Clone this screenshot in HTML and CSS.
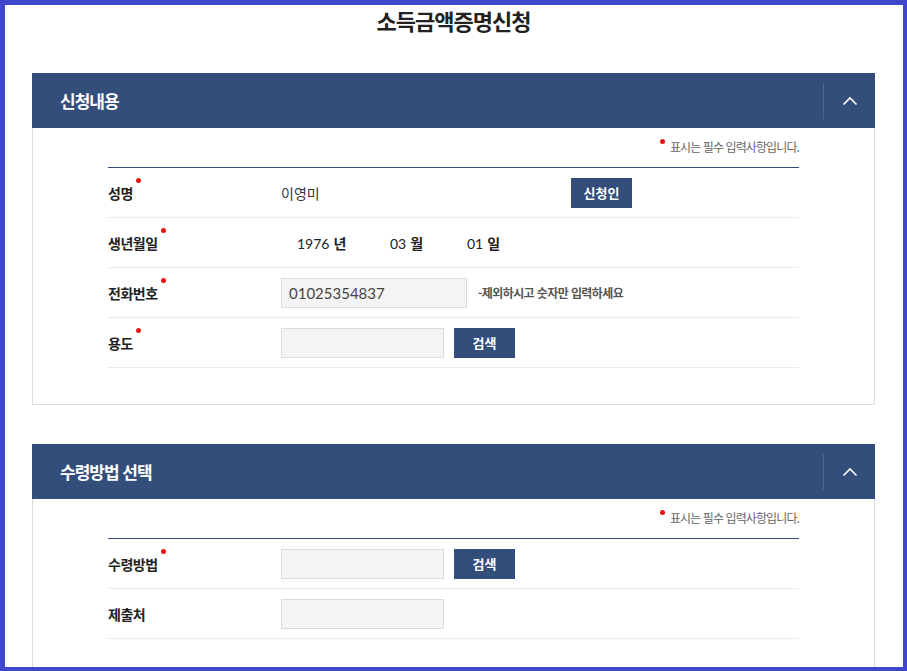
FILE: index.html
```html
<!DOCTYPE html>
<html lang="ko">
<head>
<meta charset="utf-8">
<title>소득금액증명신청</title>
<link rel="stylesheet" href="styles.css">
</head>
<body>
<div class="page">
  <h1 class="title">소득금액증명신청</h1>

  <section class="panel">
    <div class="panel-head">
      <h2 class="panel-title">신청내용</h2>
      <button class="toggle" type="button" aria-label="접기">
        <svg width="16" height="10" viewBox="0 0 16 10"><polyline points="1.5,8.5 8,2 14.5,8.5" fill="none" stroke="#fff" stroke-width="1.6"/></svg>
      </button>
    </div>
    <div class="panel-body">
      <p class="note"><span class="dot"></span>표시는 필수 입력사항입니다.</p>
      <div class="form">
        <div class="row">
          <div class="label"><span class="req">성명</span></div>
          <div class="value">
            <span class="name">이영미</span>
            <button class="btn" type="button">신청인</button>
          </div>
        </div>
        <div class="row">
          <div class="label"><span class="req">생년월일</span></div>
          <div class="value date">
            <span class="d d-y"><span class="num">1976</span> <b>년</b></span>
            <span class="d d-m"><span class="num">03</span> <b>월</b></span>
            <span class="d"><span class="num">01</span> <b>일</b></span>
          </div>
        </div>
        <div class="row">
          <div class="label"><span class="req">전화번호</span></div>
          <div class="value">
            <div class="input wide">01025354837</div>
            <span class="hint">-제외하시고 숫자만 입력하세요</span>
          </div>
        </div>
        <div class="row">
          <div class="label"><span class="req">용도</span></div>
          <div class="value">
            <div class="input"></div>
            <button class="btn" type="button">검색</button>
          </div>
        </div>
      </div>
    </div>
  </section>

  <section class="panel">
    <div class="panel-head">
      <h2 class="panel-title">수령방법 선택</h2>
      <button class="toggle" type="button" aria-label="접기">
        <svg width="16" height="10" viewBox="0 0 16 10"><polyline points="1.5,8.5 8,2 14.5,8.5" fill="none" stroke="#fff" stroke-width="1.6"/></svg>
      </button>
    </div>
    <div class="panel-body">
      <p class="note"><span class="dot"></span>표시는 필수 입력사항입니다.</p>
      <div class="form">
        <div class="row">
          <div class="label"><span class="req">수령방법</span></div>
          <div class="value">
            <div class="input"></div>
            <button class="btn" type="button">검색</button>
          </div>
        </div>
        <div class="row">
          <div class="label"><span>제출처</span></div>
          <div class="value">
            <div class="input"></div>
          </div>
        </div>
      </div>
    </div>
  </section>
</div>
</body>
</html>
```
FILE: styles.css
```css
* { box-sizing: border-box; }
html, body { margin: 0; padding: 0; }
body {
  width: 907px;
  height: 671px;
  overflow: hidden;
  border: 5px solid #3f48cc;
  border-right-width: 4px;
  border-bottom-width: 4px;
  background: #fff;
  font-family: "Noto Sans CJK KR", "Noto Sans", sans-serif;
  color: #222;
}
.page {
  width: 843px;
  margin: 0 0 0 27px;
}
.title {
  margin: 0;
  height: 68px;
  line-height: 30px;
  text-align: center;
  font-size: 22px;
  font-weight: 700;
  color: #222;
  letter-spacing: -1px;
}
.panel { margin-bottom: 39px; }
.panel-head {
  height: 55px;
  background: #344e7b;
  display: flex;
  align-items: center;
  justify-content: space-between;
}
.panel-title {
  margin: 0 0 0 28px;
  font-size: 17px;
  font-weight: 700;
  color: #fff;
  letter-spacing: -1px;
}
.toggle {
  width: 52px;
  height: 36px;
  border: 0;
  border-left: 1px solid #4d6590;
  background: transparent;
  padding: 0;
  display: flex;
  align-items: center;
  justify-content: center;
}
.panel-body {
  border: 1px solid #dcdcdc;
  border-top: 0;
  padding: 0 75px 36px 75px;
}
.note {
  margin: 0;
  height: 39px;
  padding-top: 9px;
  text-align: right;
  font-size: 12px;
  color: #666;
  letter-spacing: -0.9px;
  line-height: 20px;
}
.dot {
  display: inline-block;
  width: 5px;
  height: 5px;
  border-radius: 50%;
  background: #ee1111;
  vertical-align: top;
  margin-top: 2px;
  margin-right: 5px;
}
.form { border-top: 1px solid #344e7b; }
.row {
  display: flex;
  align-items: center;
  height: 50px;
  border-bottom: 1px solid #ebebeb;
}
.label {
  width: 173px;
  font-size: 14px;
  font-weight: 700;
  color: #222;
  letter-spacing: -0.5px;
}
.req { position: relative; }
.req::after {
  content: "";
  position: absolute;
  right: -8px;
  top: -5px;
  width: 5px;
  height: 5px;
  border-radius: 50%;
  background: #ee1111;
}
.value {
  flex: 1;
  display: flex;
  align-items: center;
  font-size: 14px;
}
.name {
  width: 290px;
  color: #333;
}
.date { padding-left: 16px; }
.d { color: #222; font-size: 14px; }
.d-y { width: 93px; }
.d-m { width: 77px; }
.num { font-family: Lato, "Noto Sans CJK KR", sans-serif; }
.d b { font-weight: 700; }
.btn {
  width: 61px;
  height: 30px;
  border: 0;
  background: #344e7b;
  color: #fff;
  font-family: "Noto Sans CJK KR", sans-serif;
  font-size: 13px;
  font-weight: 700;
  padding: 0;
}
.input {
  width: 163px;
  height: 30px;
  background: #f4f4f4;
  border: 1px solid #dcdcdc;
  margin-right: 10px;
  padding-left: 7px;
  line-height: 28px;
  font-family: Lato, "Noto Sans CJK KR", sans-serif;
  font-size: 15px;
  color: #444;
}
.input.wide { width: 186px; margin-right: 11px; }
.hint {
  font-size: 12px;
  font-weight: 700;
  color: #555;
  letter-spacing: -0.6px;
}
```
